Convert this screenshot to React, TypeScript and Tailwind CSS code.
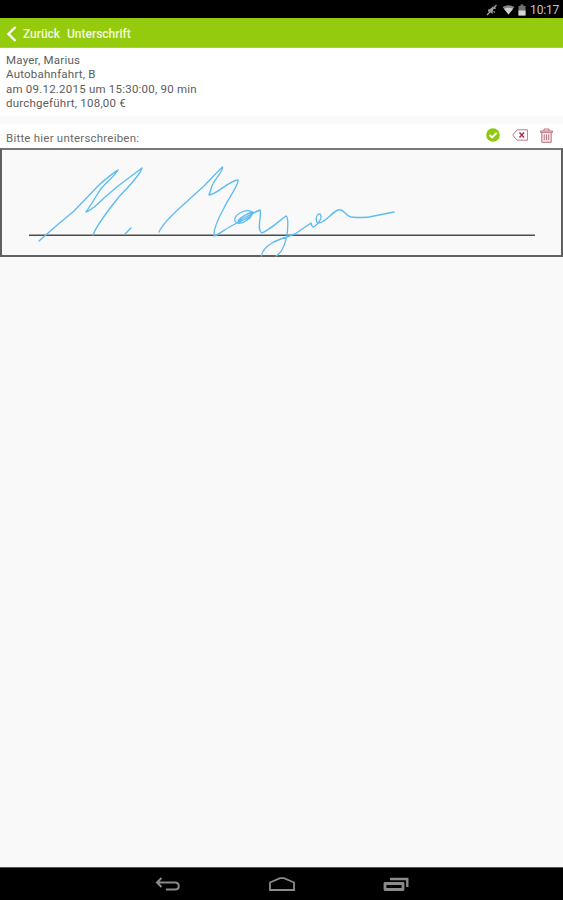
import React from 'react';

const StatusBar: React.FC = () => (
  <div className="h-[18px] shrink-0 bg-black flex items-center justify-end pt-px pr-[4px] text-[#c4c4c4]">
    <svg width="12" height="12" viewBox="0 0 12 12" className="mr-[4px]" fill="none" stroke="#a0a0a0">
      <path d="M2 5.5 L4 5 L7.5 2 L6.5 10 L4 8 L2 7.5 Z" fill="#959595" stroke="none" />
      <path d="M1 11 L10.5 1 M8 4.5 L10 4 M7.5 7.5 L9 8.5" strokeWidth="1.2" />
    </svg>
    <svg width="13" height="10" viewBox="0 0 13 10" className="mr-[3px]">
      <path d="M0.5 2 Q6.5 -1.5 12.5 2 L6.5 9.5 Z" fill="#858585" />
      <path d="M2 3.8 Q6.5 1.5 11 3.8 L6.5 9.5 Z" fill="#d0d0d0" />
    </svg>
    <svg width="8" height="12" viewBox="0 0 8 12" className="mr-[4px]">
      <path d="M2.5 0.5 h3 v1.5 h2 v9.5 h-7 V2 h2 Z" fill="#707070" />
      <path d="M0.5 6.5 h7 v5 h-7 Z" fill="#d6d6d6" />
    </svg>
    <span className="text-[12px] leading-none tracking-[-0.2px]">10:17</span>
  </div>
);

const Header: React.FC = () => (
  <div className="h-[30px] shrink-0 bg-[#95cb0d] flex items-center pt-[2px] pl-[6px] text-[#f3fadf] border-b border-[#a4d337]">
    <svg width="11" height="16" viewBox="0 0 11 16" fill="none" stroke="#fff" strokeWidth="2.4">
      <path d="M9.5 1 L2.5 8 L9.5 15" />
    </svg>
    <button className="ml-[6px] text-[12px] font-medium leading-none tracking-[-0.05px]">Zurück</button>
    <h1 className="ml-[7px] text-[12px] font-medium leading-none pt-px">Unterschrift</h1>
  </div>
);

// the tail of the "y" runs over the lower frame line
const Signature: React.FC = () => (
  <svg width="559" height="105" viewBox="2 2 559 105" className="block overflow-visible" fill="none">
    <path d="M29 87.3 H535" stroke="#4c4c4c" strokeWidth="1.6" />
    <g stroke="#5dbbf3" strokeWidth="1.35" strokeLinecap="round" strokeLinejoin="round">
      <path d="M39 93 L56 78 L74 63 L98 38 C105 31 111 27 118 22 C114 29 106 34 100 42 C95 50 91 57 86 64 C92 62 98 56 104 50 L118 38 L142 20 C140 28 125 42 118 50 C111 59 97 76 93 87" />
      <path d="M131 80 L125 86" />
      <path d="M159 84 C163 75 174 65 183 57 L204 38 C211 31 217 24 222.5 19 C224 22 214 32 212 38 L209 47 C216 47 230 32 238 32 C239 37 228 51 224 60 C218 71 213 81 214 88 C219 87 226 80 235 76 C243 72 255 68 252 64 C246 60 233 67 235 73 C238 79 251 72 253 64 C248 65 241 69 238 73 C245 70 252 65 260 62 C262 68 256 82 262 85 C271 81 279 73 286 68 C289 70 287.5 78 287.5 83 C286 94 283 104 276 108 M261.5 108 C262 103 267 98 272 95 C279 91 287 89 295 86 L311 75 C312 78 312 80 315 78 C319 75 323 69 320 66 C316 65 315 74 318 75 C324 76 332 64 338 62 C344 60 345 68 351 69 C361 70 367 70 374 68 L394 64" />
    </g>
  </svg>
);

const NavBar: React.FC = () => (
  <div className="h-[33px] shrink-0 bg-black border-t border-[#555] flex items-center justify-center gap-[88px] pt-[2px]">
    <svg width="26" height="16" viewBox="0 0 26 16" fill="none" stroke="#8a8a8a" strokeWidth="2">
      <path d="M6.5 1 L2 5.5 L6.5 10 M2 5.5 H20 C25 5.5 25 12.5 20 12.5 H11" />
    </svg>
    <svg width="26" height="16" viewBox="0 0 26 16" fill="none" stroke="#8a8a8a" strokeWidth="1.8">
      <path d="M1 13 V5.5 L11 1.2 H15 L25 5.5 V13 Z" />
    </svg>
    <svg width="26" height="16" viewBox="0 0 26 16" fill="none" stroke="#8a8a8a">
      <path d="M2 6.5 H20 V12.5 H2 Z" strokeWidth="2.8" strokeLinejoin="round" />
      <path d="M7 2 H24.3 V10" strokeWidth="2.4" />
    </svg>
  </div>
);

const App: React.FC = () => {
  const lines = ['Mayer, Marius', 'Autobahnfahrt, B', 'am 09.12.2015 um 15:30:00, 90 min', 'durchgeführt, 108,00 €'];

  return (
    <div className="w-full h-screen flex flex-col bg-[#f9f9f9] font-['Roboto',sans-serif] overflow-hidden">
      <StatusBar />
      <Header />

      <div className="h-[68px] shrink-0 bg-white pl-[6px] pt-[4.5px] text-[11.5px] leading-[14.5px] tracking-[0.22px] text-[#5c5c5c]">
        {lines.map((line) => (
          <p key={line} className="whitespace-nowrap">{line}</p>
        ))}
      </div>

      <div className="mt-[8px] h-[24px] shrink-0 bg-white pl-[6px] pr-[10px] flex items-center justify-between">
        <p className="text-[11.5px] leading-none tracking-[0.22px] text-[#6a6a6a] pt-[5px]">Bitte hier unterschreiben:</p>
        <div className="flex items-center pb-[2px]">
          <button aria-label="Bestätigen" className="mr-[12px]">
            <svg width="14" height="14" viewBox="0 0 14 14" className="block">
              <circle cx="7" cy="7" r="6.8" fill="#8cc80b" />
              <path d="M3.5 7 L6.2 9.4 L10.7 4.8" fill="none" stroke="#fff" strokeWidth="2" />
            </svg>
          </button>
          <button aria-label="Zurücknehmen" className="mr-[12px]">
            <svg width="16" height="12" viewBox="0 0 16 12" className="block" fill="none" stroke="#b5707e">
              <path d="M0.7 6 L5 0.8 H15.4 V11.2 H5 Z" strokeWidth="0.9" />
              <path d="M7.5 3.5 L12 8.5 M12 3.5 L7.5 8.5" stroke="#a23349" strokeWidth="1.5" />
            </svg>
          </button>
          <button aria-label="Löschen">
            <svg width="13" height="15" viewBox="0 0 13 15" className="block" fill="none" stroke="#b96f7d">
              <path d="M1.8 4.5 H11.2 V14.3 H1.8 Z" fill="#f6e4e7" stroke="none" />
              <path d="M0.5 4.3 V3 H12.5 V4.3 H0.5 M4 3 V1 H9 V3 M1.8 4.5 V14.3 H11.2 V4.5" strokeWidth="1" />
              <path d="M4.3 6.5 V12 M6.5 6.5 V12 M8.7 6.5 V12" strokeWidth="0.9" />
            </svg>
          </button>
        </div>
      </div>

      <div className="h-[109px] shrink-0 border-2 border-[#606060] border-t-[#777]">
        <Signature />
      </div>

      <div className="flex-1" />
      <NavBar />
    </div>
  );
};

export default App;
